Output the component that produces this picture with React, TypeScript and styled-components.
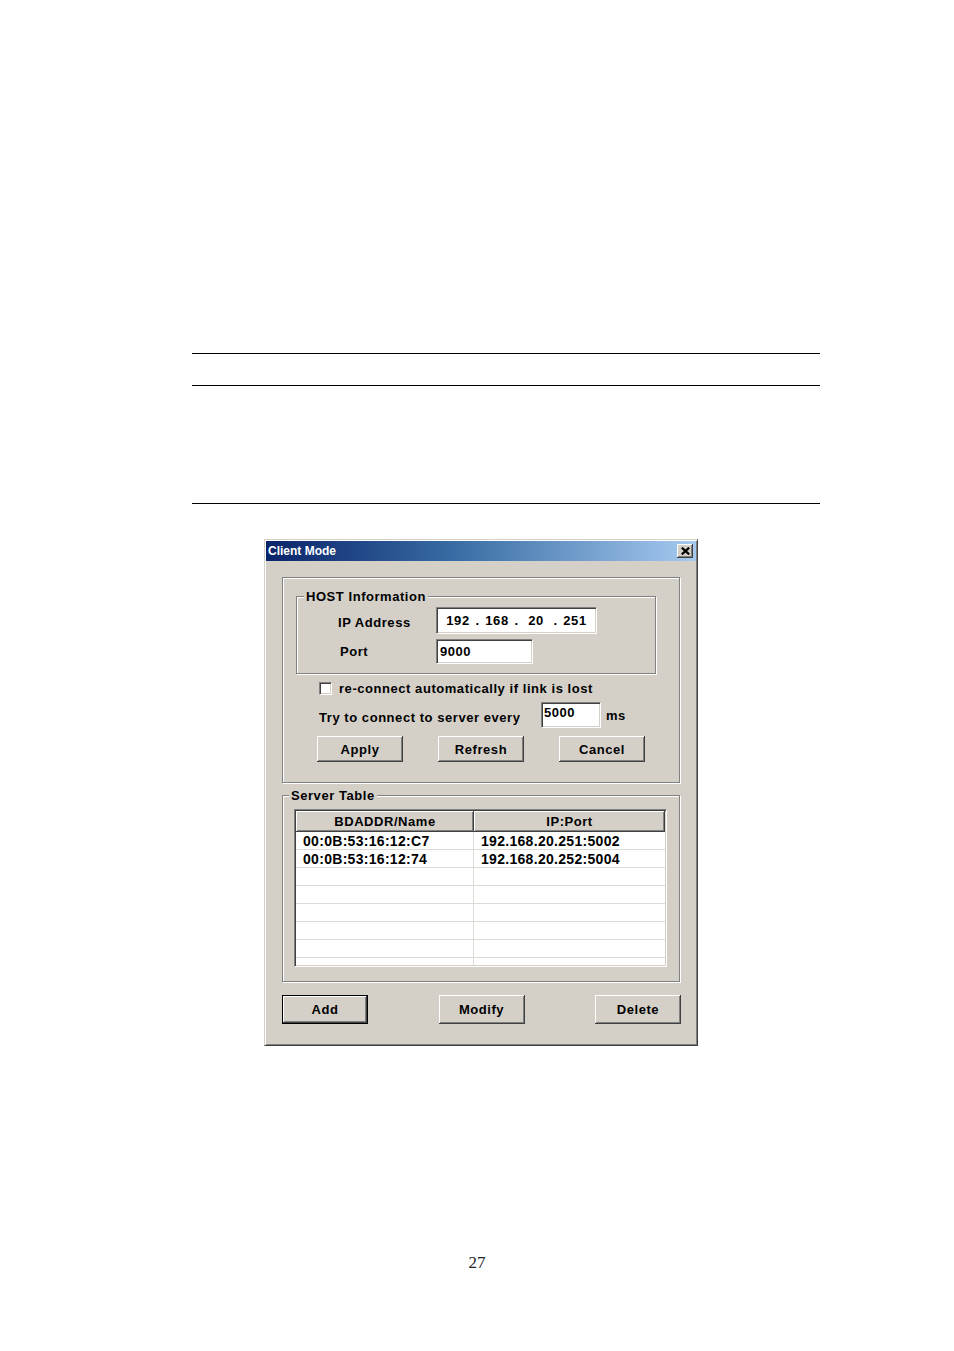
import React from "react";
import styled, { createGlobalStyle } from "styled-components";

const GlobalStyle = createGlobalStyle`
  html, body { margin: 0; padding: 0; background: #ffffff; }
  body { font-family: "Liberation Sans", Arial, sans-serif; }
  * { box-sizing: border-box; }
`;

const FACE = "#d4d0c8";
const SHADOW = "#808080";
const DARK = "#404040";

const Page = styled.div`
  width: 954px;
  min-height: 1351px;
  padding-top: 353px;
  display: flex;
  flex-direction: column;
  background: #fff;
`;

const Rule = styled.div<{ $gap: number }>`
  margin-top: ${(p) => p.$gap}px;
  margin-left: 192px;
  width: 628px;
  height: 1px;
  background: #000;
`;

const Dialog = styled.div`
  margin-top: 35px;
  margin-left: 264px;
  width: 434px;
  height: 507px;
  background: ${FACE};
  border: 1px solid;
  border-color: ${FACE} ${DARK} ${DARK} ${FACE};
  box-shadow: inset 1px 1px 0 #fff, inset -1px -1px 0 ${SHADOW};
  padding: 1px;
  display: flex;
  flex-direction: column;
  font-family: "Liberation Sans", Arial, sans-serif;
  font-size: 13px;
  font-weight: 700;
  letter-spacing: 0.55px;
  color: #000;
`;

const TitleBar = styled.div`
  height: 20px;
  display: flex;
  align-items: center;
  justify-content: space-between;
  padding: 0 3px 0 2px;
  background: linear-gradient(to right, #0a246a 0%, #3a6ea5 45%, #a6caf0 100%);
`;

const TitleText = styled.span`
  color: #fff;
  font-size: 12px;
  font-weight: 700;
  letter-spacing: 0;
`;

const CloseButton = styled.button`
  width: 16px;
  height: 14px;
  padding: 0;
  border: none;
  background: ${FACE};
  box-shadow: inset -1px -1px 0 ${DARK}, inset 1px 1px 0 #fff,
    inset -2px -2px 0 ${SHADOW}, inset 2px 2px 0 ${FACE};
  display: flex;
  align-items: center;
  justify-content: center;
`;

const Body = styled.div`
  padding: 16px 16px 0 16px;
  display: flex;
  flex-direction: column;
`;

const GroupBox = styled.div<{ $pad: string; $gap?: number; $width?: number }>`
  margin-top: ${(p) => p.$gap ?? 0}px;
  ${(p) => (p.$width ? `width: ${p.$width}px;` : "")}
  border: 1px solid ${SHADOW};
  box-shadow: inset 1px 1px 0 #fff, 1px 1px 0 #fff;
  padding: ${(p) => p.$pad};
  display: flex;
  flex-direction: column;
`;

const Legend = styled.div<{ $left: number }>`
  align-self: flex-start;
  margin-top: -8px;
  margin-left: ${(p) => p.$left}px;
  padding: 0 2px;
  height: 16px;
  line-height: 16px;
  background: ${FACE};
  white-space: nowrap;
`;

const FieldRow = styled.div<{ $top: number; $left: number; $height: number }>`
  margin-top: ${(p) => p.$top}px;
  margin-left: ${(p) => p.$left}px;
  height: ${(p) => p.$height}px;
  display: flex;
  align-items: center;
`;

const Label = styled.span<{ $width?: number; $indent?: number; $drop?: number }>`
  ${(p) => (p.$width ? `width: ${p.$width}px; flex: none;` : "")}
  padding-left: ${(p) => p.$indent ?? 0}px;
  padding-top: ${(p) => p.$drop ?? 0}px;
  white-space: nowrap;
`;

const TextInput = styled.div<{ $width: number; $height: number; $pad: number; $lift?: number }>`
  width: ${(p) => p.$width}px;
  height: ${(p) => p.$height}px;
  flex: none;
  background: #fff;
  border: 1px solid;
  border-color: ${SHADOW} #fff #fff ${SHADOW};
  box-shadow: inset 1px 1px 0 ${DARK}, inset -1px -1px 0 ${FACE};
  padding: 0 0 ${(p) => p.$lift ?? 0}px ${(p) => p.$pad + 1}px;
  display: flex;
  align-items: center;
  white-space: nowrap;
`;

const IpField = styled.span<{ $w: number }>`
  width: ${(p) => p.$w}px;
  text-align: center;
  flex: none;
`;

const CheckBox = styled.span`
  width: 13px;
  height: 13px;
  flex: none;
  background: #fff;
  border: 1px solid;
  border-color: ${SHADOW} #fff #fff ${SHADOW};
  box-shadow: inset 1px 1px 0 ${DARK}, inset -1px -1px 0 ${FACE};
`;

const ButtonRow = styled.div<{ $top: number; $left: number; $gap?: number; $width?: number }>`
  margin-top: ${(p) => p.$top}px;
  margin-left: ${(p) => p.$left}px;
  ${(p) => (p.$width ? `width: ${p.$width}px; justify-content: space-between;` : "")}
  display: flex;
  gap: ${(p) => p.$gap ?? 0}px;
`;

const PushButton = styled.button<{ $height: number; $default?: boolean }>`
  width: 86px;
  height: ${(p) => p.$height}px;
  padding: 0;
  font: inherit;
  letter-spacing: inherit;
  color: #000;
  background: ${FACE};
  border: ${(p) => (p.$default ? "1px solid #000" : "none")};
  box-shadow: inset -1px -1px 0 ${DARK}, inset 1px 1px 0 #fff,
    inset -2px -2px 0 ${SHADOW}, inset 2px 2px 0 ${FACE};
  display: flex;
  align-items: center;
  justify-content: center;
`;

const ListView = styled.div`
  margin-top: 5px;
  margin-left: 11px;
  width: 373px;
  height: 158px;
  background: #fff;
  border: 1px solid;
  border-color: ${SHADOW} #fff #fff ${SHADOW};
  box-shadow: inset 1px 1px 0 ${DARK}, inset -1px -1px 0 ${FACE};
  padding: 1px;
  display: flex;
  flex-direction: column;
  overflow: hidden;
`;

const HeaderRow = styled.div`
  display: grid;
  grid-template-columns: 178px 191px;
  height: 21px;
  flex: none;
`;

const HeaderCell = styled.div`
  background: ${FACE};
  box-shadow: inset -1px -1px 0 ${DARK}, inset 1px 1px 0 #fff,
    inset -2px -2px 0 ${SHADOW};
  display: flex;
  align-items: center;
  justify-content: center;
  white-space: nowrap;
`;

const ListRow = styled.div`
  display: grid;
  grid-template-columns: 178px 189px;
  height: 18px;
  flex: none;
  border-bottom: 1px solid #dedbd5;
`;

const ListCell = styled.div<{ $first?: boolean }>`
  padding-left: 7px;
  font-size: 14px;
  letter-spacing: 0.3px;
  line-height: 19px;
  white-space: nowrap;
  ${(p) => (p.$first ? "border-right: 1px solid #dedbd5;" : "")}
`;

const PageNumber = styled.div`
  margin-top: 207px;
  width: 954px;
  text-align: center;
  font-family: "Liberation Serif", "Times New Roman", serif;
  font-size: 17px;
  line-height: 20px;
  color: #222;
`;

const rows: [string, string][] = [
  ["00:0B:53:16:12:C7", "192.168.20.251:5002"],
  ["00:0B:53:16:12:74", "192.168.20.252:5004"],
  ["", ""],
  ["", ""],
  ["", ""],
  ["", ""],
  ["", ""],
  ["", ""],
];

export default function App() {
  return (
    <>
      <GlobalStyle />
      <Page>
        <Rule $gap={0} />
        <Rule $gap={31} />
        <Rule $gap={117} />
        <Dialog>
          <TitleBar>
            <TitleText>Client Mode</TitleText>
            <CloseButton aria-label="Close">
              <svg width="9" height="8" viewBox="0 0 9 8">
                <path d="M0.8 0.6 L8.2 7.4 M8.2 0.6 L0.8 7.4" stroke="#000" strokeWidth="2.2" />
              </svg>
            </CloseButton>
          </TitleBar>
          <Body>
            <GroupBox $pad="18px 0 20px 13px">
              <GroupBox $pad="0 0 9px 0" $width={360}>
                <Legend $left={7}>HOST Information</Legend>
                <FieldRow $top={2} $left={41} $height={27}>
                  <Label $width={98} $drop={3}>IP Address</Label>
                  <TextInput $width={161} $height={27} $pad={4}>
                    <IpField $w={32}>192</IpField>
                    <IpField $w={7}>.</IpField>
                    <IpField $w={32}>168</IpField>
                    <IpField $w={7}>.</IpField>
                    <IpField $w={32}>20</IpField>
                    <IpField $w={7}>.</IpField>
                    <IpField $w={32}>251</IpField>
                  </TextInput>
                </FieldRow>
                <FieldRow $top={5} $left={41} $height={25}>
                  <Label $width={98} $indent={2}>Port</Label>
                  <TextInput $width={97} $height={25} $pad={2}>9000</TextInput>
                </FieldRow>
              </GroupBox>
              <FieldRow $top={8} $left={23} $height={13}>
                <CheckBox />
                <Label $indent={7}>re-connect automatically if link is lost</Label>
              </FieldRow>
              <FieldRow $top={7} $left={23} $height={26}>
                <Label $width={222} $drop={4}>Try to connect to server every</Label>
                <TextInput $width={60} $height={26} $pad={1} $lift={5}>5000</TextInput>
                <Label $indent={5}>ms</Label>
              </FieldRow>
              <ButtonRow $top={8} $left={21} $gap={35}>
                <PushButton $height={26}>Apply</PushButton>
                <PushButton $height={26}>Refresh</PushButton>
                <PushButton $height={26}>Cancel</PushButton>
              </ButtonRow>
            </GroupBox>
            <GroupBox $pad="0 0 14px 0" $gap={12}>
              <Legend $left={6}>Server Table</Legend>
              <ListView>
                <HeaderRow>
                  <HeaderCell>BDADDR/Name</HeaderCell>
                  <HeaderCell>IP:Port</HeaderCell>
                </HeaderRow>
                {rows.map(([a, b], i) => (
                  <ListRow key={i}>
                    <ListCell $first>{a}</ListCell>
                    <ListCell>{b}</ListCell>
                  </ListRow>
                ))}
              </ListView>
            </GroupBox>
            <ButtonRow $top={13} $left={0} $width={399}>
              <PushButton $height={29} $default>Add</PushButton>
              <PushButton $height={29}>Modify</PushButton>
              <PushButton $height={29}>Delete</PushButton>
            </ButtonRow>
          </Body>
        </Dialog>
        <PageNumber>27</PageNumber>
      </Page>
    </>
  );
}
